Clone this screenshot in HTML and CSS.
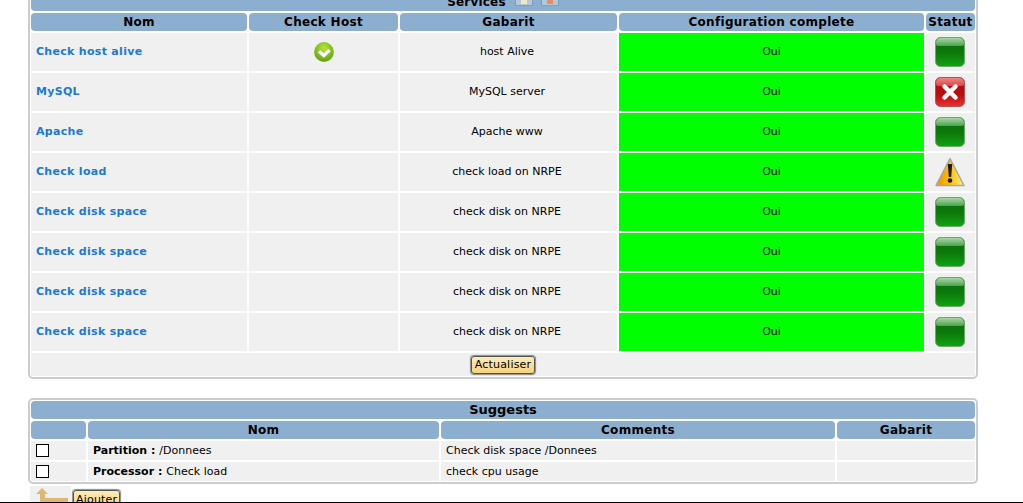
FILE: index.html
```html
<!DOCTYPE html>
<html lang="fr">
<head>
<meta charset="utf-8">
<title>Services</title>
<link rel="stylesheet" href="styles.css">
</head>
<body>
<svg class="defs" width="0" height="0" aria-hidden="true">
  <defs>
    <linearGradient id="gTop" x1="0" y1="0" x2="0" y2="1"><stop offset="0" stop-color="#a4d8a4"/><stop offset="1" stop-color="#4fa04f"/></linearGradient>
    <linearGradient id="gBody" x1="0" y1="0" x2="0" y2="1"><stop offset="0" stop-color="#0a6e0a"/><stop offset=".55" stop-color="#0b7a0b"/><stop offset="1" stop-color="#10a510"/></linearGradient>
    <linearGradient id="rTop" x1="0" y1="0" x2="0" y2="1"><stop offset="0" stop-color="#e88"/><stop offset="1" stop-color="#d44"/></linearGradient>
    <linearGradient id="rBody" x1="0" y1="0" x2="0" y2="1"><stop offset="0" stop-color="#b80c0c"/><stop offset=".6" stop-color="#ba0e0e"/><stop offset="1" stop-color="#ee3030"/></linearGradient>
    <linearGradient id="wBody" x1="0" y1="0" x2="1" y2="0"><stop offset="0" stop-color="#f09000"/><stop offset=".5" stop-color="#ffc000"/><stop offset="1" stop-color="#fff090"/></linearGradient>
    <radialGradient id="cBody" cx=".5" cy=".3" r=".75"><stop offset="0" stop-color="#b4e638"/><stop offset="1" stop-color="#5c9c10"/></radialGradient>
    <symbol id="ok" viewBox="0 0 30 30">
      <rect x=".5" y=".5" width="29" height="29" rx="5" fill="url(#gBody)" stroke="#6fa56f"/>
      <path d="M1 7V5.500a4.500 4.500 0 0 1 4.500-4.500h19a4.500 4.500 0 0 1 4.500 4.500V7q0 2-2 2H3q-2 0-2-2z" fill="url(#gTop)"/>
    </symbol>
    <symbol id="ko" viewBox="0 0 30 30">
      <rect x=".5" y=".5" width="29" height="29" rx="5" fill="url(#rBody)" stroke="#a55"/>
      <path d="M1 7V5.500a4.500 4.500 0 0 1 4.500-4.500h19a4.500 4.500 0 0 1 4.500 4.500V7q0 2-2 2H3q-2 0-2-2z" fill="url(#rTop)"/>
      <path d="M9.500 9.500l11 11M20.500 9.500l-11 11" stroke="#fff" stroke-width="4.500" stroke-linecap="round"/>
    </symbol>
    <symbol id="warn" viewBox="0 0 30 30">
      <path d="M15 1.500L29 28.500H1z" fill="url(#wBody)" stroke="#a8a8a8" stroke-width="1.500" stroke-linejoin="round"/>
      <path d="M12.800 7h4.400l-1 13h-2.400z" fill="#1c1c1c"/>
      <circle cx="15" cy="23.500" r="2.300" fill="#1c1c1c"/>
    </symbol>
    <symbol id="check" viewBox="0 0 20 20">
      <circle cx="10" cy="10" r="9.900" fill="url(#cBody)"/>
      <path d="M5 9.300l4.800 4.200 5.700-5.500" fill="none" stroke="#fff" stroke-width="3.200"/>
    </symbol>
  </defs>
</svg>
<main class="page">
  <section class="box box-services">
    <div class="bar bar-title">
      <span>Services</span>
      <span class="tool tool-first"><i class="tool-mark"></i></span>
      <span class="tool"><i class="tool-mark tool-mark-red"></i></span>
    </div>
    <div class="grid cols-services">
      <div class="bar">Nom</div>
      <div class="bar">Check Host</div>
      <div class="bar">Gabarit</div>
      <div class="bar">Configuration complete</div>
      <div class="bar">Statut</div>

      <div class="cell tall name"><a href="#">Check host alive</a></div>
      <div class="cell tall center"><svg class="ico-check"><use href="#check"/></svg></div>
      <div class="cell tall center tpl">host Alive</div>
      <div class="cell tall center green">Oui</div>
      <div class="cell tall center"><svg class="ico"><use href="#ok"/></svg></div>

      <div class="cell tall name"><a href="#">MySQL</a></div>
      <div class="cell tall"></div>
      <div class="cell tall center tpl">MySQL server</div>
      <div class="cell tall center green">Oui</div>
      <div class="cell tall center"><svg class="ico"><use href="#ko"/></svg></div>

      <div class="cell tall name"><a href="#">Apache</a></div>
      <div class="cell tall"></div>
      <div class="cell tall center tpl">Apache www</div>
      <div class="cell tall center green">Oui</div>
      <div class="cell tall center"><svg class="ico"><use href="#ok"/></svg></div>

      <div class="cell tall name"><a href="#">Check load</a></div>
      <div class="cell tall"></div>
      <div class="cell tall center tpl">check load on NRPE</div>
      <div class="cell tall center green">Oui</div>
      <div class="cell tall center"><svg class="ico"><use href="#warn"/></svg></div>

      <div class="cell tall name"><a href="#">Check disk space</a></div>
      <div class="cell tall"></div>
      <div class="cell tall center tpl">check disk on NRPE</div>
      <div class="cell tall center green">Oui</div>
      <div class="cell tall center"><svg class="ico"><use href="#ok"/></svg></div>

      <div class="cell tall name"><a href="#">Check disk space</a></div>
      <div class="cell tall"></div>
      <div class="cell tall center tpl">check disk on NRPE</div>
      <div class="cell tall center green">Oui</div>
      <div class="cell tall center"><svg class="ico"><use href="#ok"/></svg></div>

      <div class="cell tall name"><a href="#">Check disk space</a></div>
      <div class="cell tall"></div>
      <div class="cell tall center tpl">check disk on NRPE</div>
      <div class="cell tall center green">Oui</div>
      <div class="cell tall center"><svg class="ico"><use href="#ok"/></svg></div>

      <div class="cell tall name"><a href="#">Check disk space</a></div>
      <div class="cell tall"></div>
      <div class="cell tall center tpl">check disk on NRPE</div>
      <div class="cell tall center green">Oui</div>
      <div class="cell tall center"><svg class="ico"><use href="#ok"/></svg></div>

      <div class="cell actions center"><button class="btn" type="button">Actualiser</button></div>
    </div>
  </section>

  <section class="box box-suggests">
    <div class="bar bar-suggests">Suggests</div>
    <div class="grid cols-suggests">
      <div class="bar"></div>
      <div class="bar">Nom</div>
      <div class="bar">Comments</div>
      <div class="bar">Gabarit</div>

      <div class="cell short"><span class="chk"></span></div>
      <div class="cell short name-plain"><b>Partition :</b> /Donnees</div>
      <div class="cell short">Check disk space /Donnees</div>
      <div class="cell short"></div>

      <div class="cell short"><span class="chk"></span></div>
      <div class="cell short name-plain"><b>Processor :</b> Check load</div>
      <div class="cell short">check cpu usage</div>
      <div class="cell short"></div>
    </div>
  </section>

  <div class="add-row">
    <span class="add-arrow">
      <svg class="ico-arrow" viewBox="0 0 41 16"><path d="M12 2L18 8H15V12H38V16H10V8H6z" fill="#dcb873"/></svg>
    </span>
    <button class="btn btn-add" type="button">Ajouter</button>
  </div>
</main>
<div class="footline"></div>
</body>
</html>
```
FILE: styles.css
```css
html, body {
  margin: 0;
  padding: 0;
  height: 503px;
  overflow: hidden;
  background: #fff;
}
body {
  display: flex;
  flex-direction: column;
  font-family: "DejaVu Sans", sans-serif;
  font-size: 11px;
  color: #000;
}
.defs { position: absolute; }
.page {
  flex: 1;
  min-height: 0;
  overflow: hidden;
  padding: 0 45px 0 28px;
}
.box {
  width: 950px;
  box-sizing: border-box;
  border: 2px solid #ccc;
  border-radius: 5px;
  padding: 1px;
  display: flex;
  flex-direction: column;
  gap: 2px;
}
.box-services { margin-top: -10px; }
.box-suggests { margin-top: 19px; }
.grid { display: grid; gap: 2px; }
.cols-services { grid-template-columns: 216px 149px 217px 305px 49px; }
.cols-suggests { grid-template-columns: 55px 351px 394px 138px; }
.bar {
  box-sizing: border-box;
  height: 18px;
  padding-bottom: 1px;
  background: #8cafd0;
  border-radius: 4px;
  display: flex;
  align-items: center;
  justify-content: center;
  font-size: 12px;
  letter-spacing: .3px;
  font-weight: bold;
}
.bar-title { letter-spacing: .2px; padding-bottom: 0; }
.bar-suggests { font-size: 13px; letter-spacing: 0; padding-bottom: 2px; }
.tool {
  box-sizing: border-box;
  flex: none;
  width: 18px;
  height: 18px;
  margin-left: 8px;
  margin-bottom: 11px;
  border: 1px solid #7f9fbe;
  background: #b3c7da;
  display: flex;
  justify-content: center;
  align-items: flex-end;
  padding-bottom: 1px;
}
.tool-first { margin-left: 9px; }
.tool-mark { display: block; width: 6px; height: 6px; background: #f0e8c0; }
.tool-mark-red { background: #ee8a60; }
.cell {
  background: #f0f0f0;
  display: flex;
  align-items: center;
}
.tall { height: 38px; padding-bottom: 2px; box-sizing: border-box; }
.short { height: 19px; padding-left: 5px; gap: 4px; }
.center { justify-content: center; }
.tpl { padding-right: 3px; }
.name { padding-left: 5px; font-weight: bold; letter-spacing: .3px; }
.name a { color: #1a7ad4; text-decoration: none; }
.name-plain b { font-weight: bold; }
.green { background: #00ff00; }
.actions { grid-column: 1 / -1; height: 23px; }
.ico { width: 30px; height: 30px; margin: 2px 2px 0 0; }
.ico-check { width: 20px; height: 20px; margin-top: 2px; }
.chk {
  box-sizing: border-box;
  width: 13px;
  height: 13px;
  border: 1px solid #000;
  background: #fff;
}
.btn {
  box-sizing: border-box;
  height: 18px;
  padding: 0 3px;
  border: 1px solid #555;
  border-radius: 3px;
  background: linear-gradient(#fcecb8, #f5d27e);
  box-shadow: 0 0 1px 1px #888;
  font-family: "DejaVu Sans", sans-serif;
  font-size: 11px;
  letter-spacing: .2px;
  color: #000;
}
.add-row {
  display: flex;
  align-items: flex-start;
  gap: 2px;
  margin: 2px 0 0 2px;
}
.add-arrow {
  display: block;
  width: 41px;
  height: 16px;
  background: #f0f0f0;
}
.ico-arrow { display: block; width: 41px; height: 16px; }
.btn-add { margin-top: 4px; padding: 0 2px; }
.footline { height: 1px; background: #000; }
```
